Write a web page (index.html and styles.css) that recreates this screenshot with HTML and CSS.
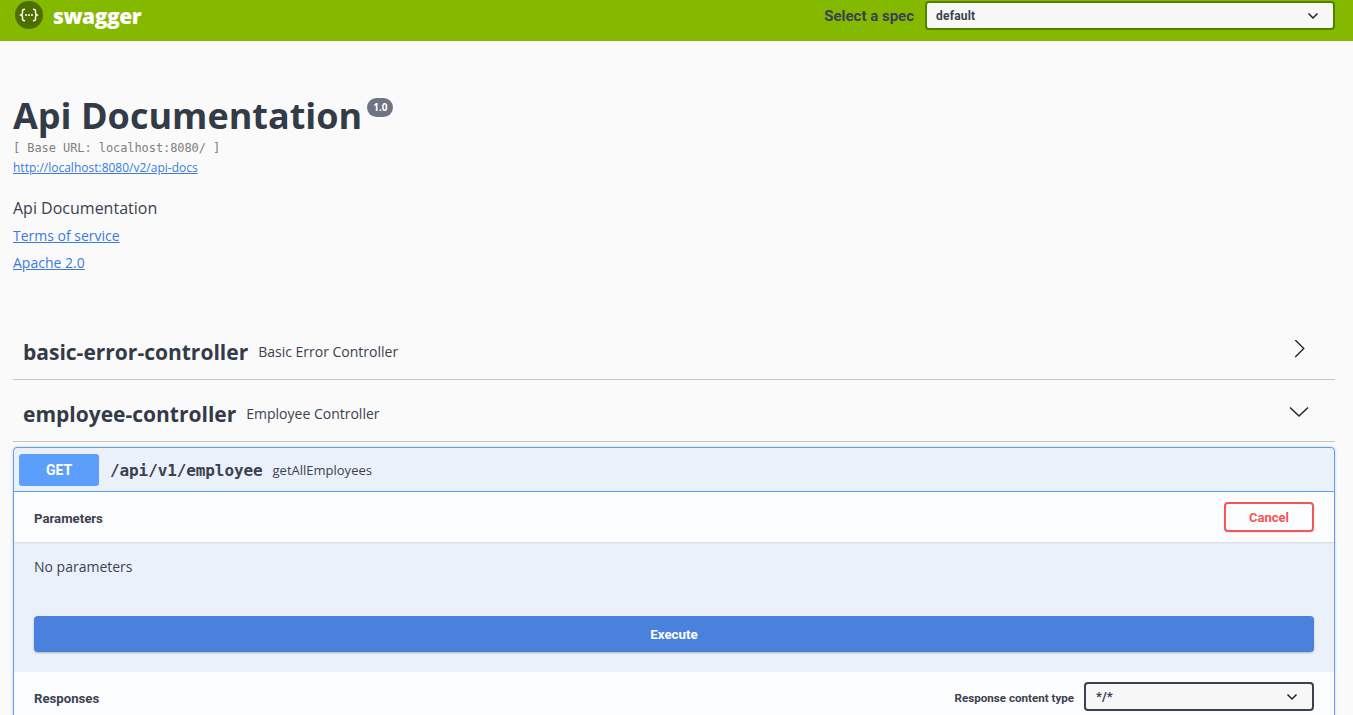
FILE: index.html
```html
<!DOCTYPE html>
<html lang="en">
<head>
<meta charset="utf-8">
<title>Swagger UI</title>
<link rel="stylesheet" href="styles.css">
</head>
<body>
<header class="topbar">
  <a class="brand">
    <svg class="logo" width="30" height="30" viewBox="0 0 30 30" aria-hidden="true">
      <circle cx="15" cy="15" r="14" fill="#4c6f00"/>
      <g fill="none" stroke="#fff" stroke-width="1.500" stroke-linecap="round">
        <path d="M10.500 9.200c-1.700 0-2 .7-2 2v1.600c0 1.200-.5 1.800-1.500 2.200 1 .4 1.500 1 1.500 2.200v1.600c0 1.300.3 2 2 2"/>
        <path d="M19.500 9.200c1.700 0 2 .7 2 2v1.600c0 1.200.5 1.800 1.500 2.200-1 .4-1.500 1-1.500 2.200v1.600c0 1.300-.3 2-2 2"/>
      </g>
      <g fill="#fff"><circle cx="12" cy="15" r="1"/><circle cx="15" cy="15" r="1"/><circle cx="18" cy="15" r="1"/></g>
    </svg>
    <span class="brand-name">swagger</span>
  </a>
  <form class="spec-form">
    <span class="spec-label">Select a spec</span>
    <div class="select spec-select"><span>default</span>
      <svg class="caret" width="12" height="8" viewBox="0 0 12 8"><path d="M1.500 1.500 6 6l4.500-4.500" fill="none" stroke="#222" stroke-width="1.500"/></svg>
    </div>
  </form>
</header>

<main class="page">
  <section class="info">
    <div class="title-row">
      <h1 class="title">Api Documentation</h1>
      <span class="version">1.0</span>
    </div>
    <div class="base-url">[ Base URL: localhost:8080/ ]</div>
    <a class="link spec-link" href="#">http://localhost:8080/v2/api-docs</a>
    <p class="desc">Api Documentation</p>
    <a class="link info-link" href="#">Terms of service</a>
    <a class="link info-link" href="#">Apache 2.0</a>
  </section>

  <section class="tags">
    <div class="tag">
      <h2 class="tag-name">basic-error-controller</h2>
      <span class="tag-desc">Basic Error Controller</span>
      <svg class="arrow" width="20" height="20" viewBox="0 0 20 20"><path d="M5.500 1 14.500 10 5.500 19" transform="translate(1 -1) scale(.95)" fill="none" stroke="#222" stroke-width="1.400"/></svg>
    </div>
    <div class="tag">
      <h2 class="tag-name">employee-controller</h2>
      <span class="tag-desc">Employee Controller</span>
      <svg class="arrow" width="20" height="20" viewBox="0 0 20 20"><path d="M1 5.500 10 14 19 5.500" fill="none" stroke="#222" stroke-width="1.400"/></svg>
    </div>

    <article class="op">
      <div class="op-summary">
        <span class="method">GET</span>
        <span class="path">/api/v1/employee</span>
        <span class="op-desc">getAllEmployees</span>
      </div>
      <div class="section-head params-head">
        <h4 class="section-title">Parameters</h4>
        <button class="cancel" type="button">Cancel</button>
      </div>
      <div class="params-body">
        <p class="no-params">No parameters</p>
        <button class="execute" type="button">Execute</button>
      </div>
      <div class="section-head responses-head">
        <h4 class="section-title">Responses</h4>
        <div class="content-type">
          <span class="ct-label">Response content type</span>
          <div class="select ct-select"><span>*/*</span>
            <svg class="caret" width="12" height="8" viewBox="0 0 12 8"><path d="M1.500 1.500 6 6l4.500-4.500" fill="none" stroke="#222" stroke-width="1.500"/></svg>
          </div>
        </div>
      </div>
    </article>
  </section>
</main>
</body>
</html>
```
FILE: styles.css
```css
* { box-sizing: border-box; }
html { overflow: hidden; height: 100%; }
body { margin: 0; background: #fafafa; color: #3b4151; font-family: "Open Sans", sans-serif; height: 100%; overflow: hidden; }
h1, h2, h4, p { margin: 0; }

.topbar { height: 41px; background: #84b900; display: flex; align-items: flex-start; justify-content: space-between; padding: 0 18px 0 14px; }
.brand { display: flex; align-items: center; height: 30px; }
.logo { display: block; }
.brand-name { margin-left: 9px; padding-top: 2px; color: #fff; font: 800 21px/30px "Open Sans", sans-serif; letter-spacing: -.45px; }
.spec-form { display: flex; align-items: center; height: 30px; }
.spec-label { font: 700 15px/30px Roboto, sans-serif; color: #3b4151; margin-right: 11px; padding-top: 1px; }
.select { display: flex; align-items: center; justify-content: space-between; background: #f7f7f7; border-radius: 4px; font: 700 12px Roboto, sans-serif; color: #3b4151; }
.spec-select { width: 410px; height: 29px; border: 2px solid #547f00; padding: 1px 14px 0 9px; letter-spacing: .2px; }
.caret { display: block; }

.page { padding: 0 18px 0 13px; }
.info { height: 277px; padding-top: 55px; display: flex; flex-direction: column; align-items: flex-start; }
.title-row { display: flex; align-items: flex-start; }
.title { font: 700 36px/40px "Open Sans", sans-serif; color: #333a48; }
.version { margin: 2px 0 0 5px; width: 26px; height: 19px; border-radius: 10px; background: #6f7382; color: #fff; font: 700 10px/19px "Noto Sans", sans-serif; text-align: center; }
.base-url { margin-top: 4px; font: 400 12px/16px "DejaVu Sans Mono", monospace; color: #808080; letter-spacing: -.08px; }
.link { color: #3b7bdc; text-decoration: underline; }
.spec-link { margin-top: 4px; font: 400 12px/16px "Open Sans", sans-serif; }
.desc { margin-top: 22px; font: 400 16px/20px "Open Sans", sans-serif; }
.info-link { font: 400 14px/20px "Open Sans", sans-serif; margin-top: 7px; }
.desc + .info-link { margin-top: 8px; }

.tag { height: 62px; display: flex; align-items: center; padding: 6px 26px 0 10px; border-bottom: 1px solid #c4c4c4; }
.tag-name { font: 700 21px/30px "Open Sans", sans-serif; color: #333a48; }
.tag-desc { margin-left: 10px; font: 400 14px/20px "Open Sans", sans-serif; flex: 1; }
.arrow { display: block; margin-top: -3px; }

.op { margin-top: 5px; border: 1px solid #5f9ff5; border-radius: 4px 4px 0 0; background: #eaf1fb; box-shadow: 0 0 3px rgba(0,0,0,.19); }
.op-summary { height: 44px; display: flex; align-items: center; padding: 0 5px; border-bottom: 1px solid #5f9ff5; }
.method { width: 80px; height: 32px; background: #5c9ffb; border-radius: 3px; color: #fff; font: 700 14px/32px Roboto, sans-serif; text-align: center; }
.path { margin-left: 11px; padding-top: 2px; font: 600 16px/20px "DejaVu Sans Mono", monospace; letter-spacing: -.1px; color: #3b4151; }
.op-desc { margin-left: 10px; font: 400 13px/20px "Open Sans", sans-serif; }

.section-head { display: flex; justify-content: space-between; background: rgba(255,255,255,.8); padding: 0 20px; }
.params-head { height: 50px; align-items: center; box-shadow: 0 1px 2px rgba(0,0,0,.1); }
.params-head .section-title { padding-top: 3px; }
.section-title { font: 700 13.200px/20px Roboto, sans-serif; color: #3b4151; }
.cancel { width: 90px; height: 30px; padding: 0; background: transparent; border: 2px solid #f25656; border-radius: 4px; color: #f25656; font: 700 13px Roboto, sans-serif; box-shadow: 0 1px 2px rgba(0,0,0,.1); }

.params-body { height: 130px; padding: 15px 20px 0; }
.no-params { font: 400 14px/20px "Open Sans", sans-serif; }
.execute { display: block; width: 100%; height: 36px; margin-top: 39px; padding: 0; background: #4a81dc; border: 0; border-radius: 4px; color: #fff; font: 700 13.300px Roboto, sans-serif; box-shadow: 0 1px 2px rgba(0,0,0,.25); }

.responses-head { height: 53px; align-items: flex-start; }
.responses-head .section-title { margin-top: 17px; }
.content-type { display: flex; align-items: center; margin-top: 10px; }
.ct-label { font: 700 11.600px/14px Roboto, sans-serif; margin: 3px 10px 0 0; }
.ct-select { width: 230px; height: 29px; border: 2px solid #3b4151; padding: 0 14px 0 10px; font-size: 13px; }
```
